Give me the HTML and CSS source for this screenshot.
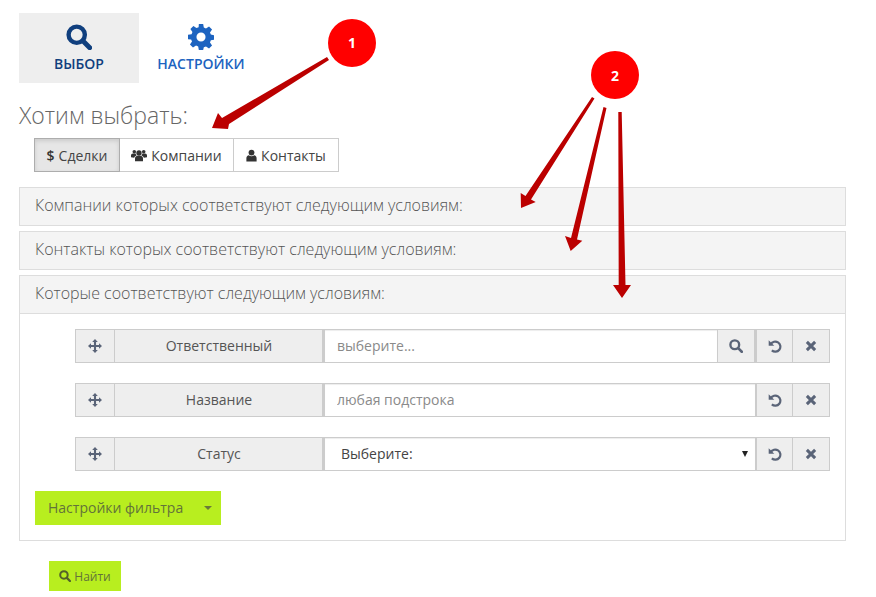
FILE: index.html
```html
<!DOCTYPE html>
<html lang="ru">
<head>
<meta charset="utf-8">
<title>Выбор</title>
<link rel="stylesheet" href="styles.css">
</head>
<body>
<svg width="0" height="0" class="defs">
  <symbol id="i-search" viewBox="0 0 16 16"><circle cx="6.600" cy="6.600" r="5" fill="none" stroke="currentColor" stroke-width="2.700"/><path d="M10.500 10.500 14.600 14.600" stroke="currentColor" stroke-width="3" stroke-linecap="round"/></symbol>
  <symbol id="i-gear" viewBox="0 0 24 24"><path fill-rule="evenodd" d="M10 0h4l.6 3.300 2 .8 2.800-1.900 2.800 2.800-1.900 2.800.8 2 3.300.6v4l-3.300.6-.8 2 1.900 2.800-2.800 2.800-2.800-1.900-2 .8L14 24h-4l-.6-3.300-2-.8-2.800 1.900-2.800-2.800 1.900-2.800-.8-2L0 14v-4l3.300-.6.8-2L2.200 4.600 5 1.800l2.800 1.900 2-.8zM12 7.800a4.200 4.200 0 1 0 0 8.400 4.200 4.200 0 0 0 0-8.400z"/></symbol>
  <symbol id="i-move" viewBox="0 0 16 16"><path d="M8 0 11.200 3.400H9.200V6.800H12.600V4.800L16 8l-3.400 3.200V9.200H9.200V12.600H11.200L8 16l-3.200-3.400H6.800V9.200H3.400v2L0 8l3.400-3.200v2H6.800V3.400H4.800z"/></symbol>
  <symbol id="i-undo" viewBox="0 0 16 16"><path d="M3.200 6A5.800 5.800 0 1 1 4.400 13" fill="none" stroke="currentColor" stroke-width="2.500"/><path d="M.8 1.400v6.400h6.400z"/></symbol>
  <symbol id="i-x" viewBox="0 0 16 16"><path d="M2.500 2.500 13.500 13.500M13.500 2.500 2.500 13.500" stroke="currentColor" stroke-width="4"/></symbol>
  <symbol id="i-users" viewBox="0 0 18 16"><circle cx="9" cy="5.200" r="3"/><circle cx="3.700" cy="3.700" r="2"/><circle cx="14.300" cy="3.700" r="2"/><path d="M4.500 14.500V11c0-1.800 1.500-2.800 2.800-2.800h3.400c1.300 0 2.800 1 2.800 2.800v3.500z"/><path d="M0 10V8c0-1.500 1-2.300 2.200-2.300h3A4 4 0 0 0 6.300 8 4 4 0 0 0 3.500 10.500zM18 10V8c0-1.500-1-2.300-2.200-2.300h-3a4 4 0 0 1-1.100 2.300 4 4 0 0 1 2.800 2.500z"/></symbol>
  <symbol id="i-user" viewBox="0 0 14 16"><circle cx="7" cy="4.300" r="3.700"/><path d="M.5 15.500V11.500C.5 9.500 2 8 3.500 7.800 4.500 8.700 5.700 9 7 9s2.500-.3 3.500-1.200c1.500.2 3 1.700 3 3.700v4z"/></symbol>
</svg>

<main class="page">
  <nav class="tabs">
    <a class="tab tab-active">
      <svg class="tab-icon"><use href="#i-search"/></svg>
      <span>ВЫБОР</span>
    </a>
    <a class="tab">
      <svg class="tab-icon"><use href="#i-gear"/></svg>
      <span>НАСТРОЙКИ</span>
    </a>
  </nav>

  <h1 class="title">Хотим выбрать:</h1>

  <div class="switch">
    <button class="switch-btn switch-on"><span class="dollar">$</span> Сделки</button>
    <button class="switch-btn"><svg class="ic-users"><use href="#i-users"/></svg> Компании</button>
    <button class="switch-btn"><svg class="ic-user"><use href="#i-user"/></svg> Контакты</button>
  </div>

  <section class="panel"><h2 class="panel-head">Компании которых соответствуют следующим условиям:</h2></section>
  <section class="panel"><h2 class="panel-head">Контакты которых соответствуют следующим условиям:</h2></section>
  <section class="panel">
    <h2 class="panel-head panel-head-open">Которые соответствуют следующим условиям:</h2>
    <div class="panel-body">
      <div class="row">
        <span class="cell cell-move"><svg class="ic-move"><use href="#i-move"/></svg></span>
        <span class="cell cell-label">Ответственный</span>
        <input class="field" placeholder="выберите...">
        <span class="cell cell-btn cell-search"><svg class="ic-small"><use href="#i-search"/></svg></span>
        <span class="cell cell-btn cell-thick"><svg class="ic-small"><use href="#i-undo"/></svg></span>
        <span class="cell cell-btn"><svg class="ic-x"><use href="#i-x"/></svg></span>
      </div>
      <div class="row">
        <span class="cell cell-move"><svg class="ic-move"><use href="#i-move"/></svg></span>
        <span class="cell cell-label">Название</span>
        <input class="field" placeholder="любая подстрока">
        <span class="cell cell-btn cell-thick"><svg class="ic-small"><use href="#i-undo"/></svg></span>
        <span class="cell cell-btn"><svg class="ic-x"><use href="#i-x"/></svg></span>
      </div>
      <div class="row">
        <span class="cell cell-move"><svg class="ic-move"><use href="#i-move"/></svg></span>
        <span class="cell cell-label">Статус</span>
        <div class="field field-select"><span>Выберите:</span><i class="select-caret"></i></div>
        <span class="cell cell-btn cell-thick"><svg class="ic-small"><use href="#i-undo"/></svg></span>
        <span class="cell cell-btn"><svg class="ic-x"><use href="#i-x"/></svg></span>
      </div>
      <button class="filter-btn">Настройки фильтра<i class="filter-caret"></i></button>
    </div>
  </section>

  <button class="find-btn"><svg class="ic-find"><use href="#i-search"/></svg> Найти</button>
</main>

<svg class="arrows" width="876" height="597" viewBox="0 0 876 597">
  <path d="M327 57 329 60 229 124 228 129 212 128 218 113 222 118z"/>
  <path d="M592 97 594.500 98.500 531 199.500 535.700 202 521 208 520.700 193 525.500 196z"/>
  <path d="M603.500 107 606.500 108 577 239.500 582.300 240.700 570.700 251 565 236 571 238z"/>
  <path d="M618.300 112 621.700 112 625.500 285 631 285 622 298 613 285 618.700 285z"/>
</svg>
<div class="badge badge-one">1</div>
<div class="badge badge-two">2</div>
</body>
</html>
```
FILE: styles.css
```css
* { box-sizing: border-box; }
html, body { margin: 0; padding: 0; }
body {
  width: 876px;
  height: 597px;
  overflow: hidden;
  background: #fff;
  font-family: "Open Sans", sans-serif;
  font-size: 14px;
  color: #555;
  position: relative;
}
.defs { position: absolute; }
.page { padding: 13px 30px 0 19px; }

.tabs { display: flex; height: 70px; }
.tab {
  width: 120px;
  display: flex;
  flex-direction: column;
  align-items: center;
  padding-top: 11px;
  font-size: 14px;
  font-weight: 600;
  color: #1c63c0;
}
.tab + .tab { width: 124px; }
.tab-active { background: #eeeeee; color: #103f7e; }
.tab-icon { width: 26px; height: 26px; fill: currentColor; margin-bottom: 4px; }
.tab span { line-height: 20px; }

.title {
  margin: 18px 0 0;
  font-size: 23px;
  font-weight: 300;
  line-height: 28px;
  color: #666;
}

.switch { display: flex; margin: 9px 0 15px 15px; height: 34px; }
.switch-btn {
  font: inherit;
  color: #444;
  background: #fff;
  border: 1px solid #ccc;
  border-left-width: 0;
  padding: 0;
  display: flex;
  align-items: center;
  justify-content: center;
  gap: 4px;
  width: 114px;
}
.switch-btn:first-child { width: 86px; border-left-width: 1px; }
.switch-btn:last-child { width: 105px; }
.switch-on { background: #e6e6e6; border-color: #adadad; box-shadow: inset 0 2px 4px rgba(0,0,0,.12); }
.dollar { font-weight: 600; color: #333; }
.ic-users { width: 16px; height: 15px; fill: #333; }
.ic-user { width: 11px; height: 13px; fill: #333; }

.panel { border: 1px solid #ddd; margin-bottom: 5px; }
.panel-head {
  margin: 0;
  height: 37px;
  background: #f4f4f4;
  padding-left: 15px;
  font-size: 16px;
  font-weight: 300;
  line-height: 35px;
  color: #555;
}
.panel-head-open { height: 38px; border-bottom: 1px solid #ddd; }
.panel-body { padding: 15px; height: 226px; }

.row { display: flex; height: 34px; margin: 0 0 20px 40px; line-height: 32px; }
.cell {
  display: flex;
  align-items: center;
  justify-content: center;
  background: #eeeeee;
  border: 1px solid #ccc;
  border-left-width: 0;
  color: #555;
  height: 34px;
}
.cell-move { width: 40px; border-left-width: 1px; }
.cell-label { width: 208px; padding: 0 0 1px 1px; }
.cell-btn { width: 37px; }
.cell-search { width: 38px; border-left-width: 1px; }
.cell-thick { border-left: 2px solid #ccc; width: 38px; }
.ic-move { width: 14px; height: 14px; fill: #5a6478; }
.ic-small { width: 14px; height: 14px; color: #5a6478; fill: #5a6478; }
.ic-x { width: 12px; height: 12px; color: #5a6478; }

.field {
  flex: 1;
  min-width: 0;
  height: 34px;
  font: inherit;
  color: #444;
  background: #fff;
  border: 1px solid #ccc;
  border-left-width: 2px;
  border-right-width: 0;
  padding: 0 12px 2px;
  box-shadow: inset 0 1px 1px rgba(0,0,0,.075);
  outline: 0;
}
.field::placeholder { color: #8a8a8a; opacity: 1; }
.field-select {
  display: flex;
  align-items: center;
  justify-content: space-between;
  padding: 0 7px 0 16px;
}
.select-caret {
  width: 0; height: 0;
  border-left: 3.500px solid transparent;
  border-right: 3.500px solid transparent;
  border-top: 6px solid #222;
}

.filter-btn {
  display: flex;
  align-items: center;
  width: 186px;
  height: 34px;
  border: 0;
  background: #b8ee1f;
  font: inherit;
  color: #63733a;
  padding: 0 0 2px 13px;
}
.filter-caret {
  margin: 2px 0 0 21px;
  width: 0; height: 0;
  border-left: 4px solid transparent;
  border-right: 4px solid transparent;
  border-top: 4px solid #6a7a3a;
}

.find-btn {
  margin: 20px 0 0 30px;
  width: 72px;
  height: 30px;
  border: 0;
  background: #b8ee1f;
  font: inherit;
  font-size: 12px;
  color: #63733a;
  padding: 0;
  display: flex;
  align-items: center;
  justify-content: center;
  gap: 3px;
}
.ic-find { width: 12px; height: 12px; color: #53622a; }

.arrows { position: absolute; left: 0; top: 0; fill: #bb0000; pointer-events: none; }
.badge {
  position: absolute;
  width: 48px;
  height: 48px;
  border-radius: 50%;
  background: #ff0000;
  color: #fff;
  font-size: 14px;
  font-weight: 700;
  display: flex;
  align-items: center;
  justify-content: center;
}
.badge-one { left: 328px; top: 19px; padding-bottom: 2px; }
.badge-two { left: 591px; top: 51px; }
```
